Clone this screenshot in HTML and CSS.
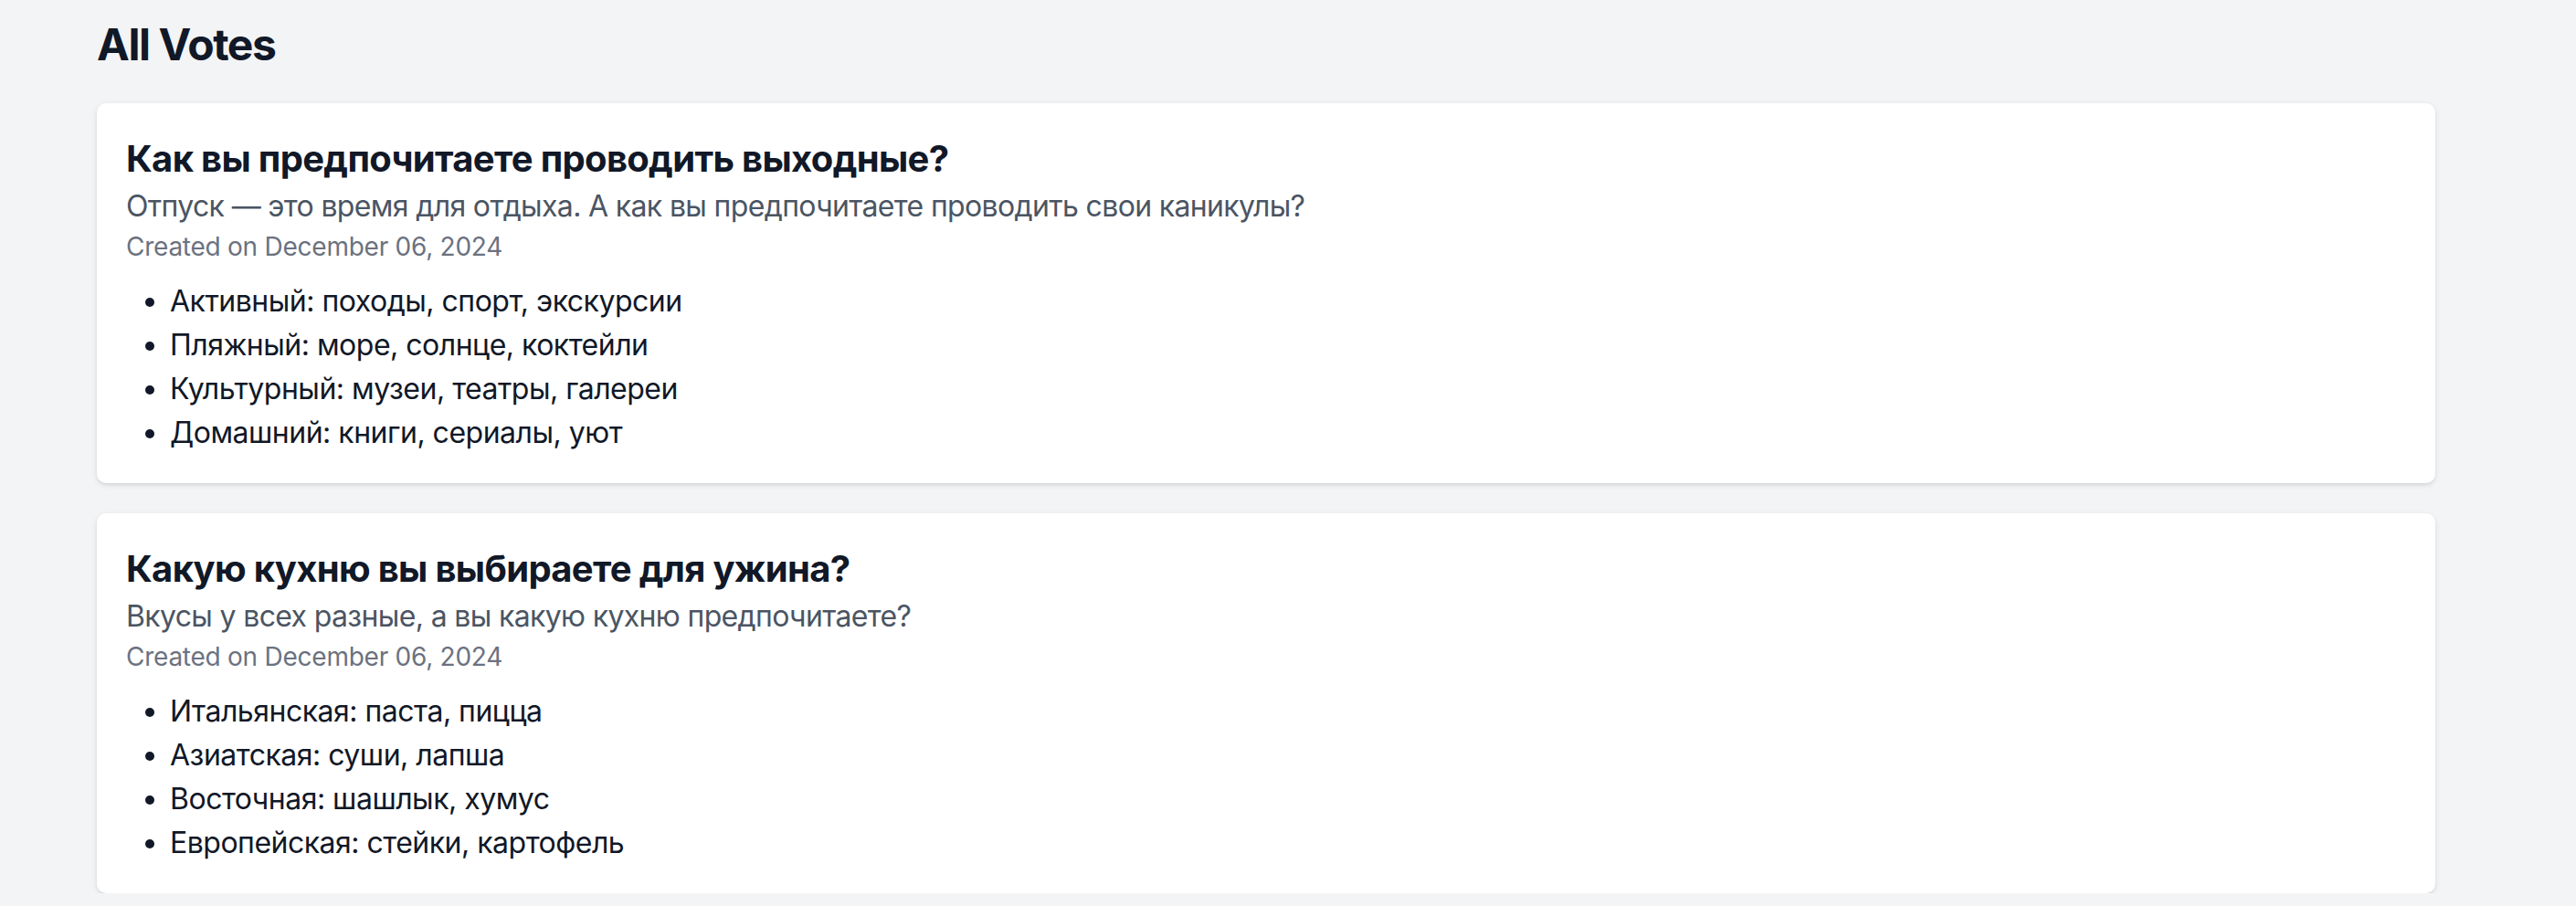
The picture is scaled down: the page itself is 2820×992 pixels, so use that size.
FILE: index.html
```html
<!DOCTYPE html>
<html lang="ru">
<head>
<meta charset="utf-8">
<title>All Votes</title>
<link rel="stylesheet" href="styles.css">
</head>
<body>
<main class="container">
  <h1 class="page-title">All Votes</h1>
  <section class="vote-list">
    <article class="vote-card">
      <h2 class="vote-title">Как вы предпочитаете проводить выходные?</h2>
      <p class="vote-desc">Отпуск — это время для отдыха. А как вы предпочитаете проводить свои каникулы?</p>
      <p class="vote-date">Created on December 06, 2024</p>
      <ul class="vote-options">
        <li>Активный: походы, спорт, экскурсии</li>
        <li>Пляжный: море, солнце, коктейли</li>
        <li>Культурный: музеи, театры, галереи</li>
        <li>Домашний: книги, сериалы, уют</li>
      </ul>
    </article>
    <article class="vote-card">
      <h2 class="vote-title">Какую кухню вы выбираете для ужина?</h2>
      <p class="vote-desc">Вкусы у всех разные, а вы какую кухню предпочитаете?</p>
      <p class="vote-date">Created on December 06, 2024</p>
      <ul class="vote-options">
        <li>Итальянская: паста, пицца</li>
        <li>Азиатская: суши, лапша</li>
        <li>Восточная: шашлык, хумус</li>
        <li>Европейская: стейки, картофель</li>
      </ul>
    </article>
  </section>
</main>
</body>
</html>
```

FILE: styles.css
```css
* { box-sizing: border-box; }

html, body {
  margin: 0;
  padding: 0;
}

body {
  background: #f3f4f6;
  font-family: Inter, "Noto Sans", "Liberation Sans", sans-serif;
  color: #111827;
}

.container {
  width: 2560px;
  margin-left: 106px;
  padding-top: 17px;
}

.page-title {
  margin: 0 0 32px 0;
  font-size: 48px;
  line-height: 64px;
  font-weight: 700;
  color: #111827;
  letter-spacing: -1.4px;
}

.vote-list {
  display: flex;
  flex-direction: column;
  gap: 33px;
}

.vote-card {
  background: #ffffff;
  border-radius: 10px;
  padding: 33px 32px 31px 32px;
  box-shadow: 0 2px 6px 0 rgba(0, 0, 0, 0.1), 0 2px 4px -2px rgba(0, 0, 0, 0.1);
}

.vote-title {
  margin: 0;
  font-size: 40px;
  line-height: 56px;
  font-weight: 700;
  color: #111827;
  letter-spacing: -0.68px;
}

.vote-desc {
  margin: 0;
  font-size: 32px;
  line-height: 48px;
  color: #4b5563;
  letter-spacing: -0.65px;
}

.vote-date {
  margin: 0;
  font-size: 28px;
  line-height: 40px;
  color: #6b7280;
  letter-spacing: -0.25px;
}

.vote-options {
  margin: 16px 0 0 0;
  padding: 0 0 0 48px;
  list-style: disc outside;
  font-size: 32px;
  line-height: 48px;
  color: #111827;
  letter-spacing: -0.5px;
}
```
